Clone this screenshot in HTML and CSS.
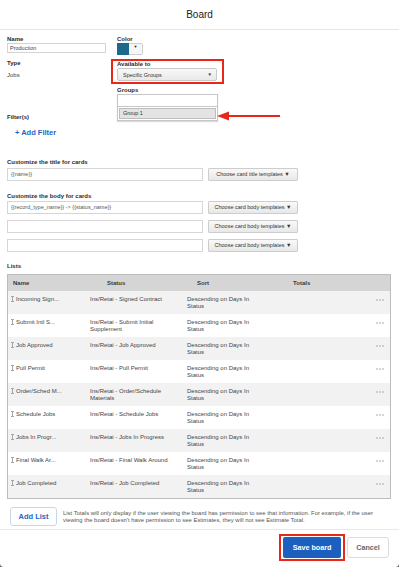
FILE: index.html
```html
<!DOCTYPE html>
<html lang="en">
<head>
    <meta charset="UTF-8">
    <title>Board</title>
    <link rel="stylesheet" href="styles.css">
</head>
<body>
<div class="modal">
    <div class="modal-head">Board</div>
    <div class="modal-body">
        <div class="top">
            <div class="col">
                <span class="lbl">Name</span>
                <div class="input name-input">Production</div>
                <span class="lbl type-lbl">Type</span>
                <span class="text jobs">Jobs</span>
                <span class="lbl filter-lbl">Filter(s)</span>
            </div>
            <div class="col">
                <span class="lbl">Color</span>
                <div class="color">
                    <div class="swatch"></div>
                    <div class="color-btn">&#9660;</div>
                </div>
                <div class="avail">
                    <span class="lbl avail-lbl">Available to</span>
                    <div class="select"><span>Specific Groups</span><span class="caret">&#9660;</span></div>
                </div>
                <span class="lbl groups-lbl">Groups</span>
                <div class="groups-box">
                    <div class="groups-input"></div>
                    <div class="groups-item">Group 1</div>
                    <svg class="arrow" width="64" height="10" viewBox="0 0 64 10">
                        <polygon points="0,5 12,0.5 12,9.5" fill="#e8261a"/>
                        <line x1="11" y1="5" x2="63" y2="5" stroke="#e8261a" stroke-width="2"/>
                    </svg>
                </div>
            </div>
        </div>

        <a class="add-filter">+ Add Filter</a>

        <span class="lbl title-lbl">Customize the title for cards</span>
        <div class="tpl-row">
            <div class="tpl-input">{{name}}</div>
            <div class="tpl-btn">Choose card title templates &#9660;</div>
        </div>

        <span class="lbl body-lbl">Customize the body for cards</span>
        <div class="tpl-rows">
            <div class="tpl-row">
                <div class="tpl-input">{{record_type_name}} -&gt; {{status_name}}</div>
                <div class="tpl-btn">Choose card body templates &#9660;</div>
            </div>
            <div class="tpl-row">
                <div class="tpl-input"></div>
                <div class="tpl-btn">Choose card body templates &#9660;</div>
            </div>
            <div class="tpl-row">
                <div class="tpl-input"></div>
                <div class="tpl-btn">Choose card body templates &#9660;</div>
            </div>
        </div>

        <span class="lbl lists-lbl">Lists</span>
        <div class="list">
            <div class="list-row list-head">
                <div class="h-name">Name</div>
                <div class="h-status">Status</div>
                <div class="h-sort">Sort</div>
                <div class="h-totals">Totals</div>
                <div></div>
            </div>
            <div class="list-row">
                <div class="c-name"><svg class="handle" width="3" height="6" viewBox="0 0 3 6"><path d="M0 0.5H3M1.5 0V6M0 5.5H3" stroke="#a6a6a6" stroke-width="1" fill="none" shape-rendering="crispEdges"/></svg>Incoming Sign...</div>
                <div class="c-status">Ins/Retai - Signed Contract</div>
                <div class="c-sort">Descending on Days In Status</div>
                <div></div>
                <div class="c-dots"><svg width="8" height="2" viewBox="0 0 8 2"><circle cx="1" cy="1" r="0.8" fill="#a0a0a0"/><circle cx="4" cy="1" r="0.8" fill="#a0a0a0"/><circle cx="7" cy="1" r="0.8" fill="#a0a0a0"/></svg></div>
            </div>
            <div class="list-row">
                <div class="c-name"><svg class="handle" width="3" height="6" viewBox="0 0 3 6"><path d="M0 0.5H3M1.5 0V6M0 5.5H3" stroke="#a6a6a6" stroke-width="1" fill="none" shape-rendering="crispEdges"/></svg>Submit Intl S...</div>
                <div class="c-status">Ins/Retai - Submit Initial Supplement</div>
                <div class="c-sort">Descending on Days In Status</div>
                <div></div>
                <div class="c-dots"><svg width="8" height="2" viewBox="0 0 8 2"><circle cx="1" cy="1" r="0.8" fill="#a0a0a0"/><circle cx="4" cy="1" r="0.8" fill="#a0a0a0"/><circle cx="7" cy="1" r="0.8" fill="#a0a0a0"/></svg></div>
            </div>
            <div class="list-row">
                <div class="c-name"><svg class="handle" width="3" height="6" viewBox="0 0 3 6"><path d="M0 0.5H3M1.5 0V6M0 5.5H3" stroke="#a6a6a6" stroke-width="1" fill="none" shape-rendering="crispEdges"/></svg>Job Approved</div>
                <div class="c-status">Ins/Retai - Job Approved</div>
                <div class="c-sort">Descending on Days In Status</div>
                <div></div>
                <div class="c-dots"><svg width="8" height="2" viewBox="0 0 8 2"><circle cx="1" cy="1" r="0.8" fill="#a0a0a0"/><circle cx="4" cy="1" r="0.8" fill="#a0a0a0"/><circle cx="7" cy="1" r="0.8" fill="#a0a0a0"/></svg></div>
            </div>
            <div class="list-row">
                <div class="c-name"><svg class="handle" width="3" height="6" viewBox="0 0 3 6"><path d="M0 0.5H3M1.5 0V6M0 5.5H3" stroke="#a6a6a6" stroke-width="1" fill="none" shape-rendering="crispEdges"/></svg>Pull Permit</div>
                <div class="c-status">Ins/Retai - Pull Permit</div>
                <div class="c-sort">Descending on Days In Status</div>
                <div></div>
                <div class="c-dots"><svg width="8" height="2" viewBox="0 0 8 2"><circle cx="1" cy="1" r="0.8" fill="#a0a0a0"/><circle cx="4" cy="1" r="0.8" fill="#a0a0a0"/><circle cx="7" cy="1" r="0.8" fill="#a0a0a0"/></svg></div>
            </div>
            <div class="list-row">
                <div class="c-name"><svg class="handle" width="3" height="6" viewBox="0 0 3 6"><path d="M0 0.5H3M1.5 0V6M0 5.5H3" stroke="#a6a6a6" stroke-width="1" fill="none" shape-rendering="crispEdges"/></svg>Order/Sched M...</div>
                <div class="c-status">Ins/Retai - Order/Schedule Materials</div>
                <div class="c-sort">Descending on Days In Status</div>
                <div></div>
                <div class="c-dots"><svg width="8" height="2" viewBox="0 0 8 2"><circle cx="1" cy="1" r="0.8" fill="#a0a0a0"/><circle cx="4" cy="1" r="0.8" fill="#a0a0a0"/><circle cx="7" cy="1" r="0.8" fill="#a0a0a0"/></svg></div>
            </div>
            <div class="list-row">
                <div class="c-name"><svg class="handle" width="3" height="6" viewBox="0 0 3 6"><path d="M0 0.5H3M1.5 0V6M0 5.5H3" stroke="#a6a6a6" stroke-width="1" fill="none" shape-rendering="crispEdges"/></svg>Schedule Jobs</div>
                <div class="c-status">Ins/Retai - Schedule Jobs</div>
                <div class="c-sort">Descending on Days In Status</div>
                <div></div>
                <div class="c-dots"><svg width="8" height="2" viewBox="0 0 8 2"><circle cx="1" cy="1" r="0.8" fill="#a0a0a0"/><circle cx="4" cy="1" r="0.8" fill="#a0a0a0"/><circle cx="7" cy="1" r="0.8" fill="#a0a0a0"/></svg></div>
            </div>
            <div class="list-row">
                <div class="c-name"><svg class="handle" width="3" height="6" viewBox="0 0 3 6"><path d="M0 0.5H3M1.5 0V6M0 5.5H3" stroke="#a6a6a6" stroke-width="1" fill="none" shape-rendering="crispEdges"/></svg>Jobs In Progr...</div>
                <div class="c-status">Ins/Retai - Jobs In Progress</div>
                <div class="c-sort">Descending on Days In Status</div>
                <div></div>
                <div class="c-dots"><svg width="8" height="2" viewBox="0 0 8 2"><circle cx="1" cy="1" r="0.8" fill="#a0a0a0"/><circle cx="4" cy="1" r="0.8" fill="#a0a0a0"/><circle cx="7" cy="1" r="0.8" fill="#a0a0a0"/></svg></div>
            </div>
            <div class="list-row">
                <div class="c-name"><svg class="handle" width="3" height="6" viewBox="0 0 3 6"><path d="M0 0.5H3M1.5 0V6M0 5.5H3" stroke="#a6a6a6" stroke-width="1" fill="none" shape-rendering="crispEdges"/></svg>Final Walk Ar...</div>
                <div class="c-status">Ins/Retai - Final Walk Around</div>
                <div class="c-sort">Descending on Days In Status</div>
                <div></div>
                <div class="c-dots"><svg width="8" height="2" viewBox="0 0 8 2"><circle cx="1" cy="1" r="0.8" fill="#a0a0a0"/><circle cx="4" cy="1" r="0.8" fill="#a0a0a0"/><circle cx="7" cy="1" r="0.8" fill="#a0a0a0"/></svg></div>
            </div>
            <div class="list-row">
                <div class="c-name"><svg class="handle" width="3" height="6" viewBox="0 0 3 6"><path d="M0 0.5H3M1.5 0V6M0 5.5H3" stroke="#a6a6a6" stroke-width="1" fill="none" shape-rendering="crispEdges"/></svg>Job Completed</div>
                <div class="c-status">Ins/Retai - Job Completed</div>
                <div class="c-sort">Descending on Days In Status</div>
                <div></div>
                <div class="c-dots"><svg width="8" height="2" viewBox="0 0 8 2"><circle cx="1" cy="1" r="0.8" fill="#a0a0a0"/><circle cx="4" cy="1" r="0.8" fill="#a0a0a0"/><circle cx="7" cy="1" r="0.8" fill="#a0a0a0"/></svg></div>
            </div>
        </div>

        <div class="lists-foot">
            <div class="add-list">Add List</div>
            <p class="note">List Totals will only display if the user viewing the board has permission to see that information. For example, if the user viewing the board doesn't have permission to see Estimates, they will not see Estimate Total.</p>
        </div>
    </div>
    <div class="modal-foot">
        <div class="save-mark"><div class="btn-save">Save board</div></div>
        <div class="btn-cancel">Cancel</div>
    </div>
</div>
</body>
</html>
```

FILE: styles.css
```css
*{
    margin: 0;
    padding: 0;
    box-sizing: border-box;
}
html{
    background: #666;
}
body{
    font-family: "Liberation Sans", Arial, sans-serif;
    color: #333;
    width: 399px;
}
.modal{
    height: 567px;
    overflow: hidden;
    background: #fff;
    border-radius: 0 0 4px 4px;
}
.modal-head{
    height: 30px;
    line-height: 29px;
    text-align: center;
    font-size: 10px;
    color: #222;
    border-bottom: 1px solid #e5e5e5;
}
.modal-body{
    padding: 0 8px 3px 7px;
}

/* top form */
.top{
    display: grid;
    grid-template-columns: 110px 1fr;
    padding-top: 5px;
}
.col{
    display: flex;
    flex-direction: column;
    align-items: flex-start;
}
.lbl{
    display: block;
    font-size: 6px;
    font-weight: bold;
    line-height: 8px;
    color: #2b2b2b;
}
.text{
    font-size: 6px;
    line-height: 8px;
    color: #444;
}
.input{
    height: 10px;
    border: 1px solid #d4d4d4;
    font-size: 5.5px;
    line-height: 8px;
    padding-left: 2px;
    color: #444;
}
.name-input{
    width: 99px;
}
.type-lbl{
    margin-top: 6px;
}
.jobs{
    margin-top: 4px;
}
.filter-lbl{
    margin-top: 34px;
}
.color{
    display: flex;
    width: 26px;
    height: 12px;
}
.swatch{
    width: 12px;
    background: #1b6a8c;
}
.color-btn{
    flex: 1;
    border: 1px solid #cfcfcf;
    border-left: 0;
    border-radius: 0 2px 2px 0;
    background: #f6f6f6;
    font-size: 4px;
    line-height: 6px;
    text-align: center;
    color: #222;
}
.avail{
    margin: 4px 0 0 -6px;
    width: 113px;
    height: 25px;
    border: 2px solid #e8261a;
    padding-left: 4px;
}
.avail-lbl{
    line-height: 7px;
}
.select{
    width: 100px;
    height: 13px;
    border: 1px solid #c9c9c9;
    border-radius: 2px;
    background: linear-gradient(#f8f8f8, #e9e9e9);
    display: flex;
    justify-content: space-between;
    align-items: center;
    padding: 0 4px 0 5px;
    font-size: 5.5px;
    color: #333;
}
.caret{
    font-size: 4.5px;
}
.groups-lbl{
    margin-top: 2px;
}
.groups-box{
    position: relative;
    width: 101px;
    border: 1px solid #c6c6c6;
    box-shadow: 0 1px 1px rgba(0,0,0,.15);
}
.groups-input{
    height: 12px;
    border-bottom: 1px solid #c6c6c6;
}
.groups-item{
    margin: 1px;
    height: 11px;
    background: #e3e3e3;
    border: 1px solid #bdbdbd;
    font-size: 5.5px;
    line-height: 9px;
    padding-left: 3px;
    color: #333;
}
.arrow{
    position: absolute;
    left: 99px;
    top: 16px;
}

.add-filter{
    display: block;
    margin-top: 8px;
    padding-left: 8px;
    font-size: 7.5px;
    font-weight: bold;
    line-height: 8px;
    color: #2166c7;
}

/* card templates */
.title-lbl{
    margin-top: 21px;
}
.body-lbl{
    margin-top: 11px;
}
.tpl-rows{
    display: flex;
    flex-direction: column;
    gap: 6px;
    margin-top: 1px;
}
.tpl-row{
    display: flex;
    gap: 5px;
    height: 13px;
    margin-top: 2px;
}
.tpl-rows .tpl-row{
    margin-top: 0;
}
.tpl-input{
    width: 196px;
    border: 1px solid #d6d6d6;
    font-size: 5.5px;
    line-height: 11px;
    padding-left: 3px;
    color: #555;
}
.tpl-btn{
    width: 90px;
    border: 1px solid #cdcdcd;
    border-radius: 1px;
    background: linear-gradient(#f9f9f9, #e8e8e8);
    font-size: 5.5px;
    line-height: 11px;
    text-align: center;
    color: #333;
}

/* lists table */
.lists-lbl{
    margin-top: 10px;
}
.list{
    margin-top: 4px;
    border: 1px solid #bcbcbc;
}
.list-row{
    display: grid;
    grid-template-columns: 82px 97px 68px 1fr 20px;
    height: 23px;
    padding-top: 5px;
    font-size: 6px;
    line-height: 7px;
    color: #444;
}
.list-row:nth-child(even){
    background: #f2f2f2;
}
.list-head{
    height: 16px;
    padding-top: 0;
    line-height: 16px;
    background: #d5d5d5;
    font-weight: bold;
    color: #3a3a3a;
}
.h-name{
    padding-left: 5px;
}
.h-status{
    padding-left: 17px;
}
.h-sort{
    padding-left: 10px;
}
.h-totals{
    padding-left: 38px;
}
.c-name{
    padding-left: 2px;
}
.handle{
    vertical-align: top;
    margin: 0 2px 0 1px;
}
.c-status{
    padding-right: 12px;
}
.c-sort{
    padding-right: 2px;
}
.c-dots{
    padding-top: 3px;
    text-align: center;
}
.c-dots svg{
    display: block;
    margin: 0 auto;
}

.lists-foot{
    display: flex;
    align-items: center;
    gap: 6px;
    margin-top: 8px;
    padding-left: 3px;
}
.add-list{
    flex: none;
    width: 47px;
    height: 19px;
    border: 1px solid #c9d6e8;
    border-radius: 3px;
    line-height: 17px;
    text-align: center;
    font-size: 7.5px;
    font-weight: bold;
    color: #2166c7;
}
.note{
    max-width: 324px;
    font-size: 5.9px;
    line-height: 7px;
    color: #555;
}

/* footer */
.modal-foot{
    border-top: 1px solid #e9e9e9;
    display: flex;
    justify-content: flex-end;
    align-items: flex-start;
    gap: 2px;
    padding: 4px 10px 0 0;
}
.save-mark{
    border: 2px solid #e8261a;
    padding: 1px 2px;
}
.btn-save{
    width: 58px;
    height: 21px;
    border-radius: 2px;
    background: #1d5fbf;
    color: #fff;
    font-size: 7.2px;
    font-weight: bold;
    line-height: 21px;
    text-align: center;
}
.btn-cancel{
    margin-top: 3px;
    width: 42px;
    height: 21px;
    border: 1px solid #dcdcdc;
    border-radius: 3px;
    color: #666;
    font-size: 7.2px;
    font-weight: bold;
    line-height: 19px;
    text-align: center;
}
```
